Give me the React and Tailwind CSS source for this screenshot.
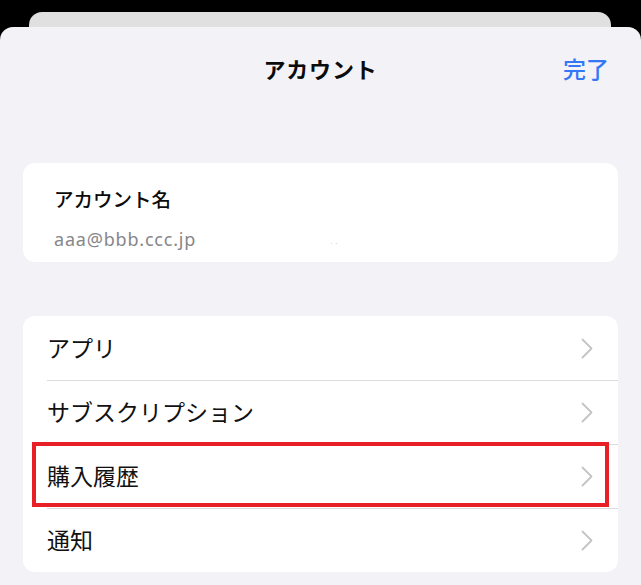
import React from "react";

const ROWS = [
  { id: "apps", label: "アプリ" },
  { id: "subs", label: "サブスクリプション" },
  { id: "history", label: "購入履歴", highlight: true },
  { id: "notify", label: "通知" },
];

function Chevron() {
  return (
    <svg width="12" height="21" viewBox="0 0 12 21" fill="none">
      <polyline
        points="1.5,1.5 10.5,10.5 1.5,19.5"
        stroke="#c4c4c7"
        strokeWidth="1.8"
        strokeLinecap="round"
        strokeLinejoin="round"
      />
    </svg>
  );
}

export default function App() {
  return (
    <div
      className="w-full h-[585px] bg-black flex flex-col overflow-hidden pt-3"
      style={{ fontFamily: '"Noto Sans", "Noto Sans CJK JP", sans-serif' }}
    >
      {/* カードの奥のシート */}
      <div className="ml-[29px] mr-[30px] h-[15px] rounded-t-[13px] bg-[#e0e0e0] flex-shrink-0" />

      {/* メインシート */}
      <div className="flex-1 bg-[#f2f2f7] rounded-t-[13px] flex flex-col">
        {/* ヘッダー */}
        <div className="relative h-[84px] flex items-center justify-center flex-shrink-0">
          <h1 className="text-[22px] font-bold text-[#0b0b0b] tracking-[0.8px]">アカウント</h1>
          <button className="absolute right-[32px] top-1/2 -translate-y-1/2 text-[23px] font-medium text-[#3478f6]">
            完了
          </button>
        </div>

        {/* アカウント情報 */}
        <div className="mt-[52px] mx-[23px] h-[99px] bg-white rounded-[12px] px-[31px] pt-[25px]">
          <div className="text-[19.5px] leading-[24px] font-medium text-[#0b0b0b]">アカウント名</div>
          <div className="mt-[16px] h-[22px] overflow-hidden flex items-start">
            <span className="text-[18px] leading-[22px] text-[#86868a] tracking-[0.8px]">aaa@bbb.ccc.jp</span>
            <span className="ml-[134px] mt-[12px] text-[8px] leading-[8px] text-[#d0d0d4] tracking-[3px]">··</span>
          </div>
        </div>

        {/* メニュー */}
        <div className="mt-[54px] mx-[23px] bg-white rounded-[12px] flex flex-col">
          {ROWS.map((row, i) => (
            <div key={row.id} className="relative h-[64px] pl-[24px] flex">
              <div
                className={`flex-1 flex items-center justify-between pr-[25px] ${
                  i > 0 ? "border-t border-[#dcdcdf]" : ""
                }`}
              >
                <span className="text-[23px] text-[#111111]">{row.label}</span>
                <Chevron />
              </div>
              {row.highlight && (
                <div className="absolute left-[9px] right-[9px] top-[-2px] bottom-[1px] border-[4.5px] border-[#e81f27] pointer-events-none" />
              )}
            </div>
          ))}
        </div>
      </div>
    </div>
  );
}
